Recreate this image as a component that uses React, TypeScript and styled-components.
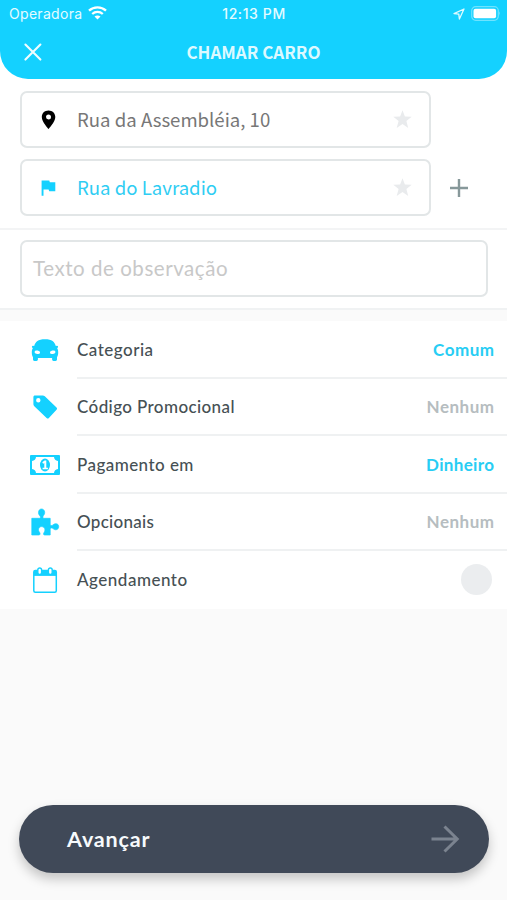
import React from "react";
import styled, { createGlobalStyle } from "styled-components";

const CYAN = "#14d1ff";
const LINE = "#e2e6e7";

const GlobalStyle = createGlobalStyle`
  *, *::before, *::after { box-sizing: border-box; }
  body { margin: 0; background: #fafafa; }
  button { border: 0; padding: 0; background: none; font: inherit; color: inherit; }
  svg { display: block; overflow: visible; flex: none; }
`;

const Screen = styled.div`
  display: flex;
  flex-direction: column;
  width: 507px;
  height: 900px;
  overflow: hidden;
  background: #fafafa;
  font-family: Lato, "Open Sans", sans-serif;
`;

const Top = styled.div`
  background: #fff;
`;

const Header = styled.header`
  height: 79px;
  background: ${CYAN};
  color: #fff;
  border-radius: 0 0 28px 28px;
`;

const StatusBar = styled.div`
  display: grid;
  grid-template-columns: 1fr auto 1fr;
  align-items: center;
  height: 28px;
  padding: 0 6px 0 9px;
  font: 400 14px/28px Inter, sans-serif;
  color: #e4fbff;
`;

const StatusGroup = styled.div<{ $end?: boolean }>`
  display: flex;
  align-items: center;
  gap: 6px;
  justify-content: ${(p) => (p.$end ? "flex-end" : "flex-start")};
  height: 28px;
  padding-bottom: ${(p) => (p.$end ? 1 : 0)}px;
  letter-spacing: 0.3px;
`;

const SignalSlot = styled.span`
  padding-bottom: 2px;
`;

const Clock = styled.span`
  font-weight: 500;
  letter-spacing: 0.6px;
  margin-right: 2px;
`;

const TitleBar = styled.div`
  display: grid;
  grid-template-columns: 24px 1fr 24px;
  align-items: center;
  height: 48px;
  padding: 0 21px;
`;

const Title = styled.h1`
  margin: 0;
  text-align: center;
  font: 700 17px/48px "Noto Sans CJK SC", sans-serif;
  letter-spacing: 0;
  color: #dcf9ff;
`;

const Addresses = styled.section`
  display: grid;
  grid-template-columns: 411px 55px;
  row-gap: 11px;
  padding: 12px 0 12px 20px;
  border-bottom: 2px solid #f3f4f5;
`;

const Field = styled.div<{ $color: string }>`
  display: flex;
  align-items: center;
  height: 57px;
  padding: 0 17px 0 17px;
  border: 2px solid ${LINE};
  border-radius: 7px;
  color: ${(p) => p.$color};
  font: 400 18.6px/51px "Noto Sans CJK SC", sans-serif;
`;

const FieldIcon = styled.span`
  width: 38px;
`;

const FieldText = styled.span`
  flex: 1;
  padding-bottom: 2px;
  white-space: nowrap;
`;

const AddButton = styled.button`
  display: flex;
  align-items: center;
  justify-content: center;
  color: #87989a;
`;

const NoteSection = styled.section`
  padding: 10px 19px 11px 20px;
  border-bottom: 2px solid #f0f2f3;
`;

const Note = styled.div`
  height: 57px;
  padding-left: 11px;
  border: 2px solid ${LINE};
  border-radius: 7px;
  font-size: 20.5px;
  line-height: 52px;
  letter-spacing: 0.55px;
  color: #c8c8c8;
`;

const Options = styled.ul`
  list-style: none;
  margin: 11px 0 0;
  padding: 0;
  background: #fff;
`;

const Option = styled.li`
  display: flex;
  align-items: center;
  height: 57.5px;
`;

const OptionIcon = styled.span`
  display: flex;
  justify-content: center;
  width: 77px;
  padding: 0 13px 0 26px;
  color: ${CYAN};
`;

const OptionBody = styled.div<{ $divided: boolean }>`
  flex: 1;
  display: flex;
  align-items: center;
  justify-content: space-between;
  height: 100%;
  padding: 2px 13px 0 0;
  border-bottom: 2px solid ${(p) => (p.$divided ? "#eff1f2" : "transparent")};
`;

const OptionLabel = styled.span<{ $spacing: number }>`
  font-size: 17px;
  font-weight: 500;
  line-height: 24px;
  letter-spacing: ${(p) => p.$spacing}px;
  color: #465054;
`;

const OptionValue = styled.span<{ $active?: boolean; $spacing: number }>`
  font-size: 17px;
  font-weight: 700;
  line-height: 24px;
  letter-spacing: ${(p) => p.$spacing}px;
  margin-right: -${(p) => p.$spacing}px;
  color: ${(p) => (p.$active ? "#27cdf4" : "#b6bdc0")};
`;

const Toggle = styled.span`
  width: 31px;
  height: 31px;
  margin-right: 2px;
  border-radius: 50%;
  background: #ebedef;
`;

const Footer = styled.footer`
  margin-top: auto;
  padding: 0 18px 27px 19px;
`;

const NextButton = styled.button`
  display: flex;
  align-items: center;
  justify-content: space-between;
  width: 100%;
  height: 68px;
  padding: 0 29px 0 48px;
  border-radius: 34px;
  background: #404958;
  box-shadow: 0 6px 12px rgba(0, 0, 0, 0.22);
  color: #f7fafc;
  font-size: 21.5px;
  font-weight: 700;
  letter-spacing: 0.85px;
`;

const WifiIcon = () => (
  <svg width="19" height="14" viewBox="0 0 19 14" fill="none" stroke="#fff" strokeWidth="2.3">
    <path d="M1 4.7C5.7.2 13.3.2 18 4.7" />
    <path d="M4.2 8C7.2 5.2 11.8 5.2 14.8 8" />
    <path d="M9.5 13.6 6.5 10.6C8.2 9.1 10.8 9.1 12.5 10.6Z" fill="#fff" stroke="none" />
  </svg>
);

const LocationIcon = () => (
  <svg width="12" height="12" viewBox="0 0 12 12" fill="none" stroke="#dffaff" strokeWidth="1.3" strokeLinejoin="round">
    <path d="M11 1 1 5.6 5.8 6.2 6.4 11Z" />
  </svg>
);

const BatteryIcon = () => (
  <svg width="30" height="15" viewBox="0 0 30 15">
    <rect x=".7" y=".7" width="26.6" height="13.6" rx="4" fill="none" stroke="#6fe3ff" strokeWidth="1.2" />
    <rect x="2.5" y="2.8" width="22.6" height="9.4" rx="2" fill="#fff" />
    <path d="M28.3 5.3Q30 7.5 28.3 9.7Z" fill="#8be9ff" />
  </svg>
);

const CloseIcon = () => (
  <svg width="24" height="24" viewBox="0 0 24 24" stroke="#f0fdff" strokeWidth="2.1" strokeLinecap="round">
    <path d="m4.4 4.6 15 15m0-15-15 15" />
  </svg>
);

const PinIcon = () => (
  <svg width="20" height="20" viewBox="0 0 20 20">
    <path fill="#000" fillRule="evenodd" d="M9.5.6C5.6.6 2.8 3.4 2.8 7.1c0 4.8 6.7 12 6.7 12s6.8-7.2 6.8-12C16.3 3.4 13.4.6 9.5.6Zm0 3.9a2.5 2.5 0 1 1 0 5 2.5 2.5 0 0 1 0-5Z" />
  </svg>
);

const FlagIcon = () => (
  <svg width="20" height="20" viewBox="0 0 20 20">
    <path fill={CYAN} d="M2.6 2.5h7.7l.5 1.8h5.5v9h-6.1l-.6-1.900H4.500v6.300H2.600Z" />
  </svg>
);

const StarIcon = () => (
  <svg width="19" height="19" viewBox="0 0 19 19">
    <path fill="#e9ebed" d="m9.5.2 2.400 6.200 6.800.4-5.300 4.200 1.800 6.900-5.700-3.800-5.800 3.800L5.600 11 .3 6.800l6.800-.4Z" />
  </svg>
);

const PlusIcon = () => (
  <svg width="18" height="18" viewBox="0 0 18 18" stroke="currentColor" strokeWidth="2.4">
    <path d="M9 0v18M0 9h18" />
  </svg>
);

const CarIcon = () => (
  <svg width="28" height="24" viewBox="0 0 28 24">
    <path
      fill="currentColor"
      d="M3.200 8C4.400 3.900 7 1.200 14 1.200S23.600 3.900 24.800 8l1.200-.3c1.200.2 1.400 1.300.6 2-.2.200-.3.300-.5.400.8 1.200 1.100 2.600 1.100 4.300 0 2-.5 3.700-1.200 4.800v2.300c0 2-4.900 2-4.900 0v-1.600H6.900v1.600c0 2-4.900 2-4.900 0v-2.300C1.300 18.100.8 16.400.8 14.400c0-1.700.3-3.100 1.100-4.300-.2-.1-.3-.2-.5-.4-.8-.7-.6-1.800.6-2Z"
    />
    <ellipse cx="6.300" cy="14.300" rx="2.800" ry="1.700" fill="#fff" transform="rotate(8 6.300 14.300)" />
    <ellipse cx="21.700" cy="14.300" rx="2.800" ry="1.700" fill="#fff" transform="rotate(-8 21.700 14.300)" />
  </svg>
);

const TagIcon = () => (
  <svg width="26" height="26" viewBox="0 0 26 26">
    <path
      fill="currentColor"
      fillRule="evenodd"
      d="M3 1.400h7.800c.8 0 1.400.3 2 .8L24.500 13.500c.7.7.7 1.600 0 2.300l-7.600 8.100c-.7.7-1.600.7-2.300 0L2.300 12.200c-.6-.6-.9-1.200-.9-2V3c0-1 .6-1.600 1.600-1.600Zm3.300 2.700a2.200 2.200 0 1 0 0 4.400 2.200 2.200 0 0 0 0-4.400Z"
    />
  </svg>
);

const MoneyIcon = () => (
  <svg width="30" height="20" viewBox="0 0 30 20">
    <path
      fill="currentColor"
      fillRule="evenodd"
      d="M1 0h28q1 0 1 1v18q0 1-1 1H1q-1 0-1-1V1q0-1 1-1Zm5 2q-.3 3.500-4 4v8q3.700.5 4 4h18q.3-3.500 4-4V6q-3.700-.5-4-4Z"
    />
    <ellipse cx="15" cy="10" rx="5" ry="6.500" fill="currentColor" />
    <path d="M12.300 7.200 14.600 5.500h1.700v7.200h1.600v1.500h-5.300v-1.500h1.700V8l-1.200.8Z" fill="#fff" />
  </svg>
);

const PuzzleIcon = () => (
  <svg width="28" height="28" viewBox="0 0 28 28">
    <path
      fill="currentColor"
      stroke="currentColor"
      strokeWidth=".7"
      strokeLinejoin="round"
      d="M.8 10.300h7.600c1 0 1.300-.8.900-1.900-.6-1-1.800-1.800-1.800-3.700C7.500 2.400 8.700 1 10.500 1s3.200 1.400 3.200 3.600c0 1.900-1.300 2.800-1.700 3.900-.4 1.100.1 1.800 1.100 1.800h6.100v5.800c0 1.300.8 1.800 2 1.300 1.200-.6 1.800-1.700 3.500-1.700 1.900 0 3 1.100 3 2.900s-1.100 3.200-3 3.200c-1.700 0-2.300-1.200-3.500-1.700-1.200-.4-2 .1-2 1.400v5.500h-5.500c-1.200 0-1.500-.9-.9-2 .6-1.200 1.100-1.600 1.100-3.300s-1.300-3.100-3.200-3.100-3.200 1.400-3.200 3.100 1 2.100 1.400 3.300c.4 1.100.1 2-1.100 2h-7Z"
    />
  </svg>
);

const CalendarIcon = () => (
  <svg width="24" height="26" viewBox="0 0 24 26" fill="none" stroke="currentColor">
    <rect x=".8" y="3.500" width="22.500" height="21.700" rx="1.500" strokeWidth="1.500" />
    <path d="M1 3.500h22v5.400H1Z" fill="currentColor" stroke="none" />
    <rect x="4.800" y="1" width="3.800" height="6.500" rx="1.900" fill="#fff" strokeWidth="1.400" />
    <rect x="15.400" y="1" width="3.800" height="6.500" rx="1.900" fill="#fff" strokeWidth="1.400" />
  </svg>
);

const ArrowIcon = () => (
  <svg width="30" height="28" viewBox="0 0 30 28" fill="none" stroke="#7b838f" strokeWidth="3">
    <path d="M1.500 14h26M14.500 1.500 27.200 14 14.500 26.500" />
  </svg>
);

type Row = {
  label: string;
  labelSpacing: number;
  icon: React.ReactNode;
  value?: string;
  valueSpacing?: number;
  active?: boolean;
};

const rows: Row[] = [
  { label: "Categoria", labelSpacing: 0.5, icon: <CarIcon />, value: "Comum", valueSpacing: 0.5, active: true },
  { label: "Código Promocional", labelSpacing: 0.4, icon: <TagIcon />, value: "Nenhum", valueSpacing: 0.5 },
  { label: "Pagamento em", labelSpacing: 0.45, icon: <MoneyIcon />, value: "Dinheiro", valueSpacing: 0.35, active: true },
  { label: "Opcionais", labelSpacing: 0.3, icon: <PuzzleIcon />, value: "Nenhum", valueSpacing: 0.5 },
  { label: "Agendamento", labelSpacing: 0.5, icon: <CalendarIcon /> },
];

export default function App() {
  return (
    <Screen>
      <GlobalStyle />
      <Top>
        <Header>
          <StatusBar>
            <StatusGroup>
              Operadora
              <SignalSlot>
                <WifiIcon />
              </SignalSlot>
            </StatusGroup>
            <Clock>12:13 PM</Clock>
            <StatusGroup $end>
              <LocationIcon />
              <BatteryIcon />
            </StatusGroup>
          </StatusBar>
          <TitleBar>
            <button aria-label="Fechar">
              <CloseIcon />
            </button>
            <Title>CHAMAR CARRO</Title>
          </TitleBar>
        </Header>
        <Addresses>
          <Field $color="#777777">
            <FieldIcon>
              <PinIcon />
            </FieldIcon>
            <FieldText>Rua da Assembléia, 10</FieldText>
            <StarIcon />
          </Field>
          <span />
          <Field $color="#2fcdf3">
            <FieldIcon>
              <FlagIcon />
            </FieldIcon>
            <FieldText>Rua do Lavradio</FieldText>
            <StarIcon />
          </Field>
          <AddButton aria-label="Adicionar parada">
            <PlusIcon />
          </AddButton>
        </Addresses>
        <NoteSection>
          <Note>Texto de observação</Note>
        </NoteSection>
      </Top>
      <Options>
        {rows.map((row, i) => (
          <Option key={row.label}>
            <OptionIcon>{row.icon}</OptionIcon>
            <OptionBody $divided={i < rows.length - 1}>
              <OptionLabel $spacing={row.labelSpacing}>{row.label}</OptionLabel>
              {row.value ? (
                <OptionValue $active={row.active} $spacing={row.valueSpacing ?? 0}>
                  {row.value}
                </OptionValue>
              ) : (
                <Toggle />
              )}
            </OptionBody>
          </Option>
        ))}
      </Options>
      <Footer>
        <NextButton>
          Avançar
          <ArrowIcon />
        </NextButton>
      </Footer>
    </Screen>
  );
}
